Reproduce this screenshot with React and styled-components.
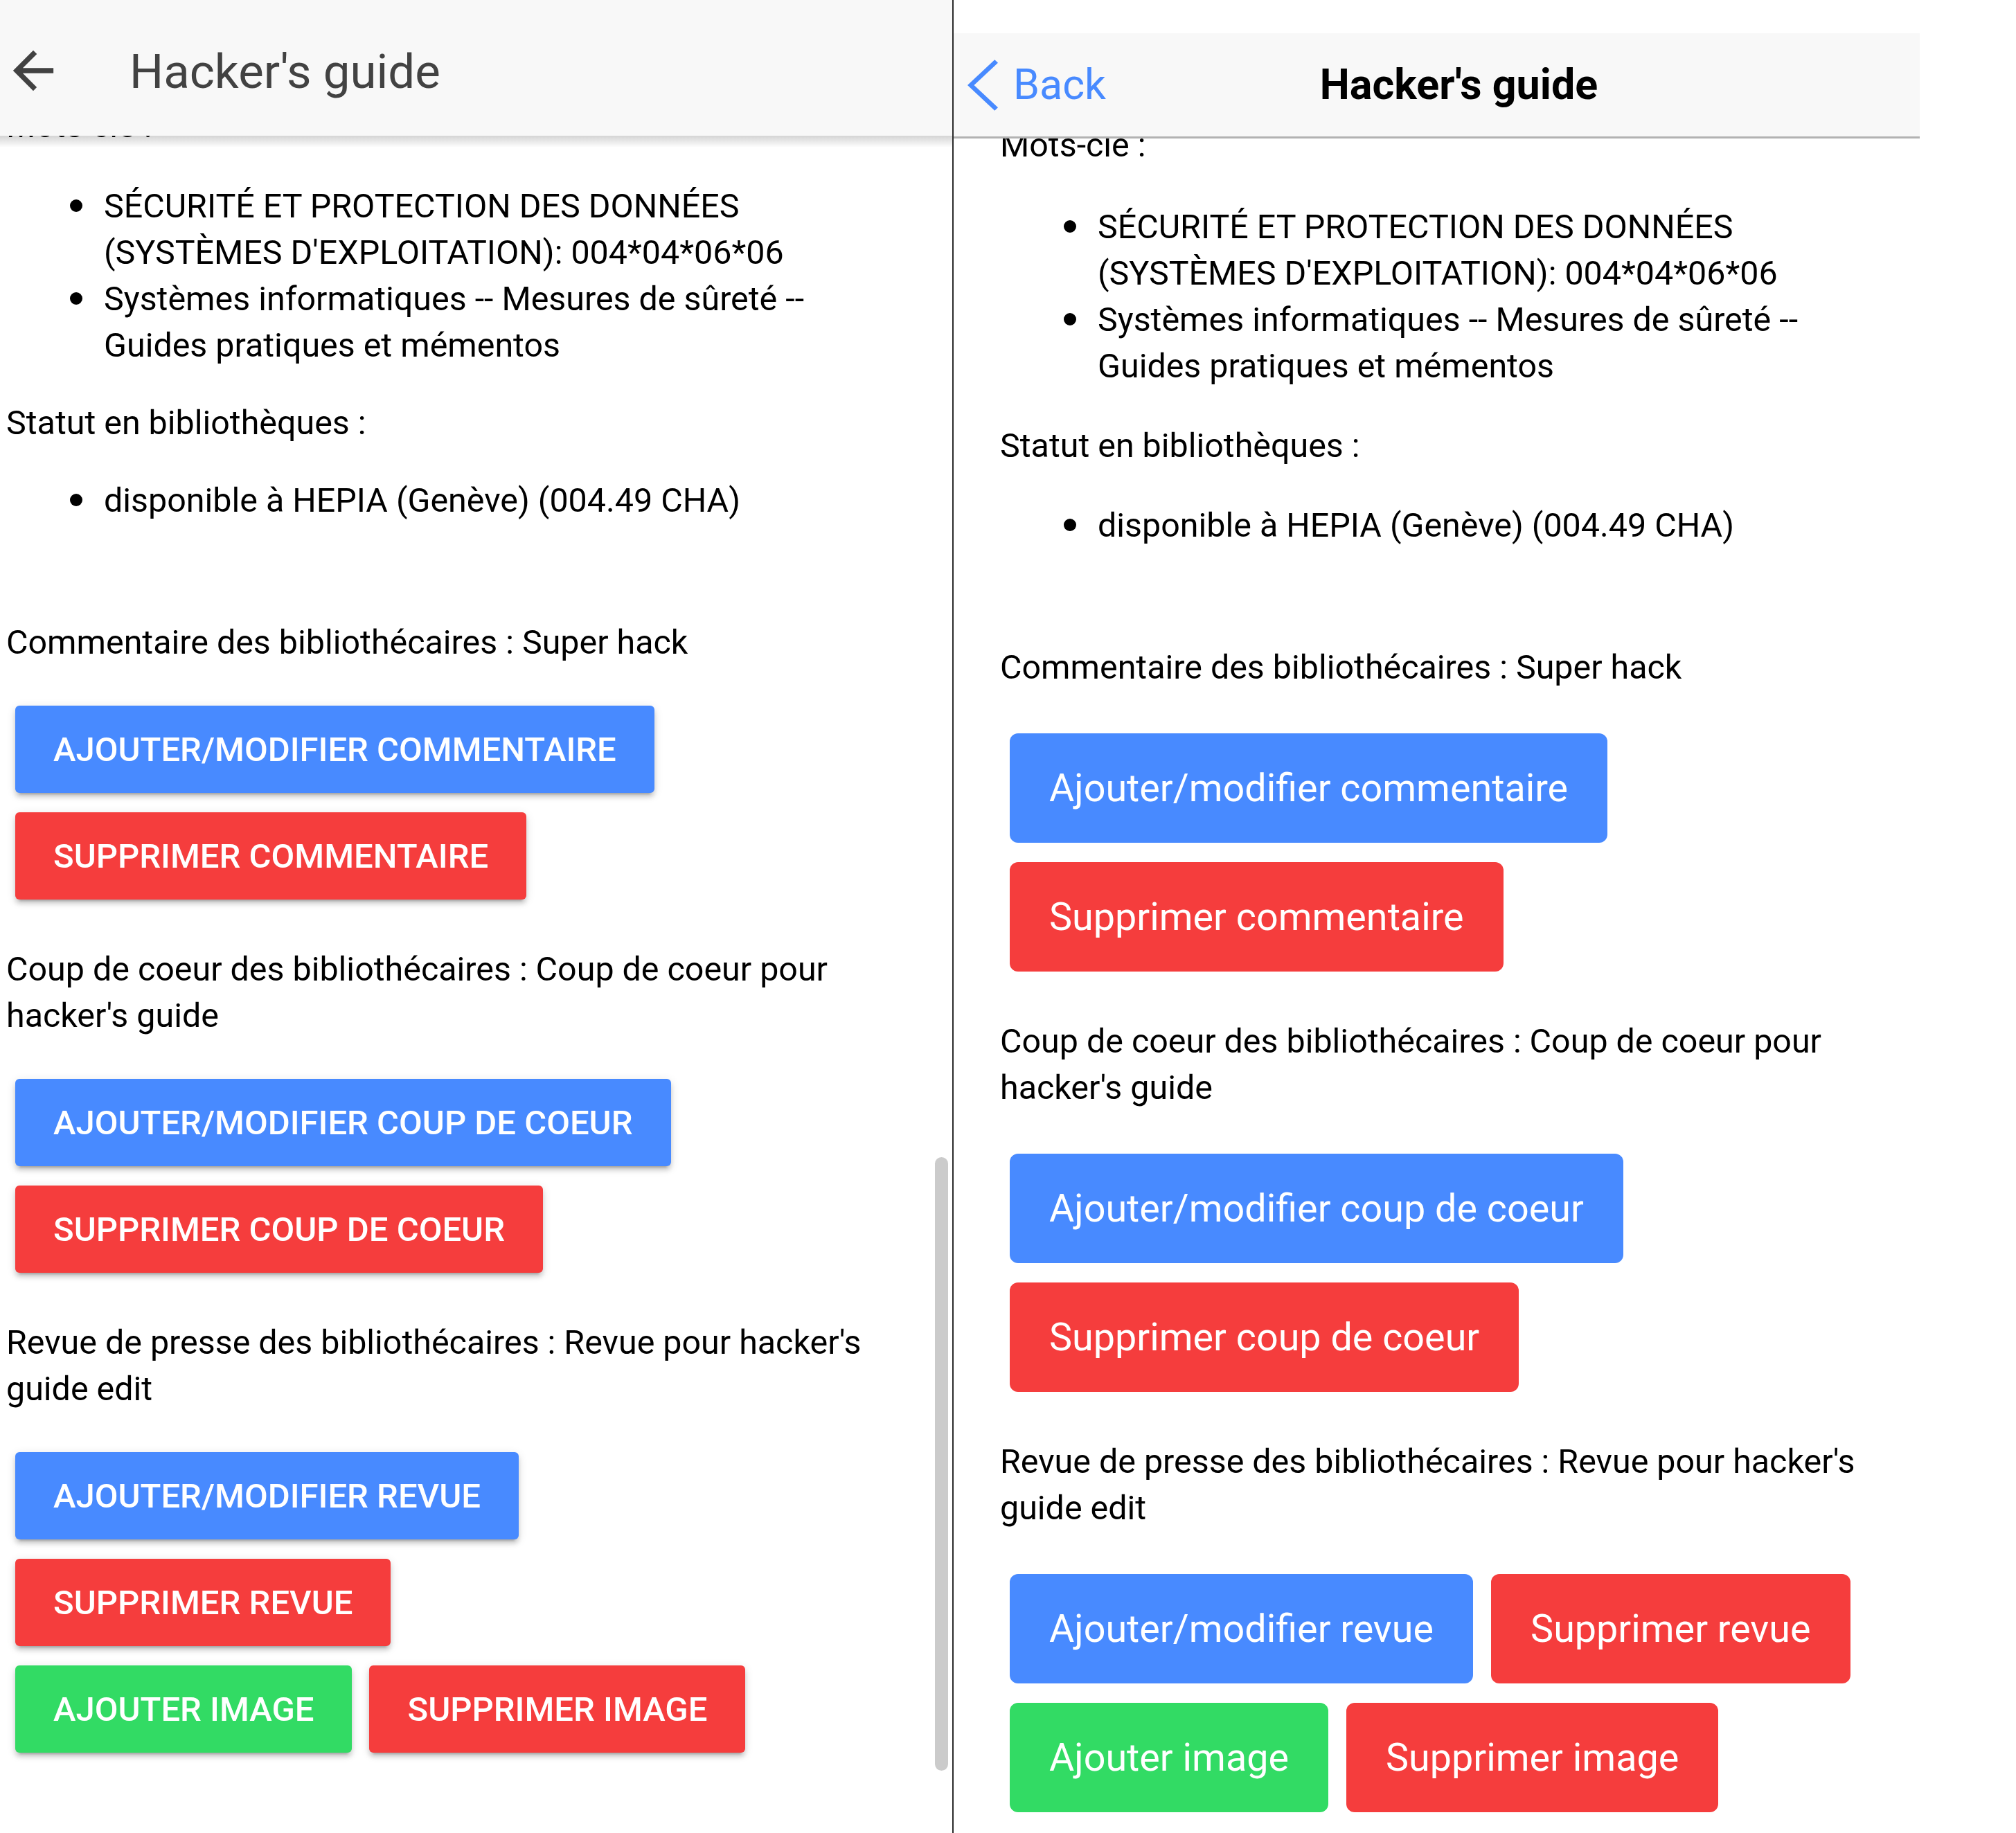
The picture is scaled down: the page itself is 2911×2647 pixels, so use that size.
import React from "react"
import styled, { createGlobalStyle, css } from "styled-components"

const GlobalStyle = createGlobalStyle`
  html, body {
    margin: 0;
    padding: 0;
    background: #fff;
  }
  body {
    font-family: Roboto, "Noto Sans", "Liberation Sans", sans-serif;
    color: #000;
  }
  * {
    box-sizing: border-box;
  }
`

const platforms = {
  md: {
    deviceWidth: 1375,
    padLeft: 9,
    padRight: 98,
    offset: -48,
    btnHeight: 126,
    btnPad: 55,
    btnRadius: 6,
    btnFont: 49,
    btnWeight: 500,
    btnGapY: 28,
    btnGapX: 25,
    groupTop: 58,
  },
  ios: {
    deviceWidth: 1395,
    padLeft: 67,
    padRight: 54,
    offset: -24,
    btnHeight: 158,
    btnPad: 57,
    btnRadius: 12,
    btnFont: 55.7,
    btnWeight: 400,
    btnGapY: 28,
    btnGapX: 26,
    groupTop: 62,
  },
}

const colors = {
  primary: "#488aff",
  danger: "#f53d3d",
  secondary: "#32db64",
}

const Screen = styled.div`
  display: flex;
  width: 2911px;
  height: 2647px;
  overflow: hidden;
  background: #fff;
`

const Device = styled.div`
  position: relative;
  display: flex;
  flex-direction: column;
  flex-shrink: 0;
  width: ${(p) => p.$width}px;
  height: 100%;
  overflow: hidden;
  background: #fff;
`

const Divider = styled.div`
  flex-shrink: 0;
  width: 2px;
  background: #2b2b2b;
`

const MdHeader = styled.header`
  position: relative;
  z-index: 2;
  flex-shrink: 0;
  display: flex;
  align-items: center;
  height: 196px;
  padding: 8px 0 0 18px;
  background: #f8f8f8;
  &::after {
    content: "";
    position: absolute;
    left: 0;
    right: 0;
    top: 100%;
    height: 17px;
    background: linear-gradient(rgba(0, 0, 0, 0.17), rgba(0, 0, 0, 0));
  }
`

const MdTitle = styled.h1`
  margin: 2px 0 0 109px;
  font-size: 69px;
  font-weight: 400;
  color: #424242;
  line-height: 1;
`

const IosHeader = styled.header`
  position: relative;
  z-index: 2;
  flex-shrink: 0;
  display: grid;
  grid-template-columns: 1fr auto 1fr;
  align-items: center;
  height: 152px;
  margin-top: 48px;
  padding-left: 20px;
  background: #f8f8f8;
  border-bottom: 3px solid #b2b2b2;
`

const BackButton = styled.div`
  display: flex;
  align-items: center;
  gap: 22px;
  color: #488aff;
  font-size: 61px;
  line-height: 1;
`

const IosTitle = styled.h1`
  margin: 0;
  padding-left: 44px;
  font-size: 61px;
  font-weight: 700;
  color: #000;
  line-height: 1;
`

const Content = styled.div`
  flex: 1;
  min-height: 0;
  overflow: hidden;
`

const Scroll = styled.div`
  margin-top: ${(p) => p.$offset}px;
  padding: 0 ${(p) => p.$padRight}px 0 ${(p) => p.$padLeft}px;
`

const Para = styled.p`
  margin: ${(p) => p.$top}px 0 0;
  font-size: 48.4px;
  line-height: 67px;
`

const List = styled.ul`
  list-style: none;
  margin: ${(p) => p.$top}px 0 0;
  padding: 0;
`

const Item = styled.li`
  display: flex;
  gap: 31px;
  padding-left: 92px;
  font-size: 48.4px;
  line-height: 67px;
`

const Dot = styled.span`
  flex-shrink: 0;
  width: 18px;
  height: 18px;
  margin-top: 24px;
  border-radius: 50%;
  background: #000;
`

const ButtonGroup = styled.div`
  display: flex;
  flex-direction: column;
  gap: ${(p) => p.$cfg.btnGapY}px;
  margin-top: ${(p) => p.$cfg.groupTop}px;
  padding-left: ${(p) => p.$indent}px;
`

const ButtonRow = styled.div`
  display: flex;
  gap: ${(p) => p.$gap}px;
`

const Button = styled.button`
  display: inline-flex;
  align-items: center;
  height: ${(p) => p.$cfg.btnHeight}px;
  padding: 0 ${(p) => p.$cfg.btnPad}px;
  border: 0;
  border-radius: ${(p) => p.$cfg.btnRadius}px;
  background: ${(p) => colors[p.$color]};
  color: #fff;
  font-family: Roboto, "Noto Sans", sans-serif;
  font-size: ${(p) => p.$cfg.btnFont}px;
  font-weight: ${(p) => p.$cfg.btnWeight};
  white-space: nowrap;
  ${(p) =>
    p.$md &&
    css`
      text-transform: uppercase;
      box-shadow: 0 6px 6px 0 rgba(0, 0, 0, 0.14), 0 8px 3px -6px rgba(0, 0, 0, 0.2),
        0 3px 14px 0 rgba(0, 0, 0, 0.12);
    `}
`

const Scrollbar = styled.div`
  position: absolute;
  left: 1350px;
  top: 1671px;
  width: 19px;
  height: 886px;
  border-radius: 10px;
  background: #cbcbcb;
`

const MdBackIcon = () => (
  <svg width="60" height="60" viewBox="80 80 352 352" fill="#424242">
    <path d="M427 234.625H167.296l119.702-119.702L256 85 85 256l171 171 29.922-29.924-118.626-119.701H427v-42.75z" />
  </svg>
)

const IosBackIcon = () => (
  <svg width="44" height="74" viewBox="160 96 192 320" fill="#488aff">
    <path d="M352 115.4L331.3 96 160 256l171.3 160 20.7-19.3L201.5 256z" />
  </svg>
)

const keywords = [
  "SÉCURITÉ ET PROTECTION DES DONNÉES (SYSTÈMES D'EXPLOITATION): 004*04*06*06",
  "Systèmes informatiques -- Mesures de sûreté -- Guides pratiques et mémentos",
]

const sections = [
  {
    text: "Commentaire des bibliothécaires : Super hack",
    md: [[["primary", "Ajouter/modifier commentaire"]], [["danger", "Supprimer commentaire"]]],
    ios: [[["primary", "Ajouter/modifier commentaire"]], [["danger", "Supprimer commentaire"]]],
  },
  {
    text: "Coup de coeur des bibliothécaires : Coup de coeur pour hacker's guide",
    md: [[["primary", "Ajouter/modifier coup de coeur"]], [["danger", "Supprimer coup de coeur"]]],
    ios: [[["primary", "Ajouter/modifier coup de coeur"]], [["danger", "Supprimer coup de coeur"]]],
  },
  {
    text: "Revue de presse des bibliothécaires : Revue pour hacker's guide edit",
    md: [
      [["primary", "Ajouter/modifier revue"]],
      [["danger", "Supprimer revue"]],
      [
        ["secondary", "Ajouter image"],
        ["danger", "Supprimer image"],
      ],
    ],
    ios: [
      [
        ["primary", "Ajouter/modifier revue"],
        ["danger", "Supprimer revue"],
      ],
      [
        ["secondary", "Ajouter image"],
        ["danger", "Supprimer image"],
      ],
    ],
  },
]

const Details = ({ kind }) => {
  const cfg = platforms[kind]
  const md = kind === "md"
  return (
    <Content>
      <Scroll $offset={cfg.offset} $padLeft={cfg.padLeft} $padRight={cfg.padRight}>
        <Para $top={0}>Mots-clé :</Para>
        <List $top={md ? 49 : 51}>
          {keywords.map((k) => (
            <Item key={k}>
              <Dot />
              <span>{k}</span>
            </Item>
          ))}
        </List>
        <Para $top={md ? 45 : 48}>Statut en bibliothèques :</Para>
        <List $top={md ? 45 : 48}>
          <Item>
            <Dot />
            <span>disponible à HEPIA (Genève) (004.49 CHA)</span>
          </Item>
        </List>
        {sections.map((s, i) => (
          <React.Fragment key={s.text}>
            <Para $top={i === 0 ? 138 : 67}>{s.text}</Para>
            <ButtonGroup $cfg={cfg} $indent={md ? 13 : 14}>
              {s[kind].map((row, r) => (
                <ButtonRow key={r} $gap={cfg.btnGapX}>
                  {row.map(([color, label]) => (
                    <Button key={label} $cfg={cfg} $color={color} $md={md}>
                      {label}
                    </Button>
                  ))}
                </ButtonRow>
              ))}
            </ButtonGroup>
          </React.Fragment>
        ))}
      </Scroll>
    </Content>
  )
}

const App = () => (
  <>
    <GlobalStyle />
    <Screen>
      <Device $width={platforms.md.deviceWidth}>
        <MdHeader>
          <MdBackIcon />
          <MdTitle>Hacker's guide</MdTitle>
        </MdHeader>
        <Details kind="md" />
        <Scrollbar />
      </Device>
      <Divider />
      <Device $width={platforms.ios.deviceWidth}>
        <IosHeader>
          <BackButton>
            <IosBackIcon />
            <span>Back</span>
          </BackButton>
          <IosTitle>Hacker's guide</IosTitle>
          <span />
        </IosHeader>
        <Details kind="ios" />
      </Device>
    </Screen>
  </>
)

export default App
